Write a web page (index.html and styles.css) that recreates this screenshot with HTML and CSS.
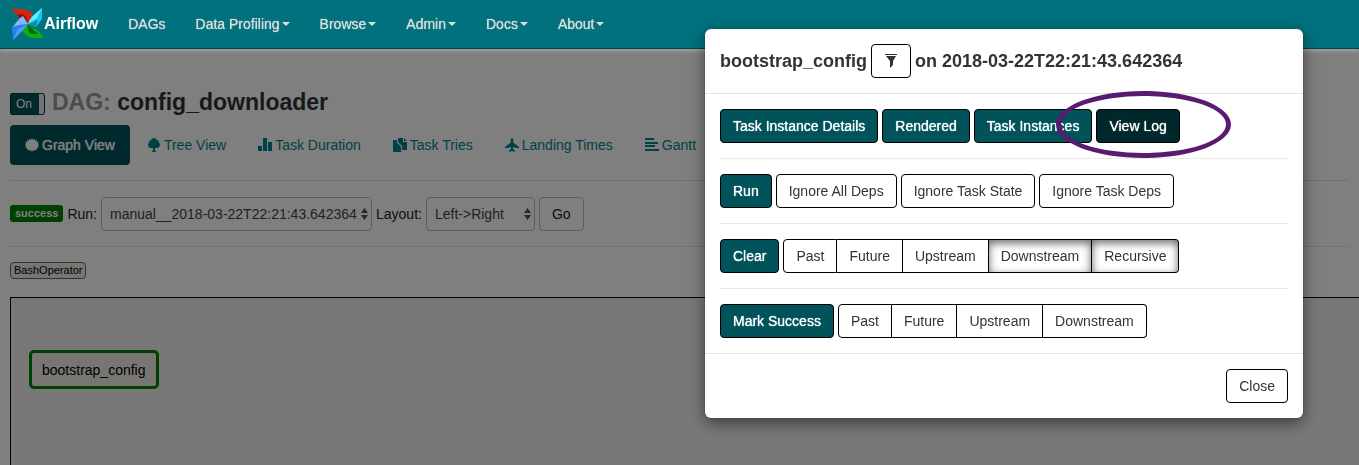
FILE: index.html
```html
<!DOCTYPE html>
<html lang="en">
<head>
<meta charset="utf-8">
<title>Airflow - DAG: config_downloader</title>
<link rel="stylesheet" href="styles.css">
</head>
<body>
<nav class="navbar">
  <a class="brand" href="#">
    <svg class="logo" viewBox="0 0 34 34" aria-hidden="true">
      <path d="M1 2H14Q19 3 22 7L25 11 18 17Q15 13 11 12 8 10 7 8 4 5 1 2Z" fill="#d42412"/>
      <path d="M7 8Q10 6 14 8 18 11 18 17 15 13 11 12Z" fill="#8c1409"/>
      <path d="M32 1V12L26 20 18 17Q20 11 24 8Z" fill="#12c8ee"/>
      <path d="M32 1L27 11 18 17Q20 11 24 8Z" fill="#5deeff"/>
      <path d="M26 20L18 17 28 13Z" fill="#0790b0"/>
      <path d="M34 31H22Q15 29 12 24L18 17Q22 22 26 22 30 25 34 31Z" fill="#0bb012"/>
      <path d="M18 17Q17 24 21 27L28 27Q22 22 18 17Z" fill="#066a0c"/>
      <path d="M3 33L2 20 9 14 18 17 12 24Z" fill="#2f7cf2"/>
      <path d="M3 20Q8 12 13 9L18 17 9 18Z" fill="#86b6f8"/>
      <path d="M3 33L8 22 18 17 12 24Z" fill="#4d9cf8"/>
    </svg>
    <span>Airflow</span>
  </a>
  <ul class="menu">
    <li><a href="#">DAGs</a></li>
    <li><a href="#">Data Profiling<i class="caret"></i></a></li>
    <li><a href="#">Browse<i class="caret"></i></a></li>
    <li><a href="#">Admin<i class="caret"></i></a></li>
    <li><a href="#">Docs<i class="caret"></i></a></li>
    <li><a href="#">About<i class="caret"></i></a></li>
  </ul>
</nav>

<main class="page">
  <header class="dag-header">
    <button class="toggle" type="button" aria-pressed="true"><span>On</span></button>
    <h1><span class="muted">DAG:</span> config_downloader</h1>
  </header>
  <ul class="tabs">
    <li><a class="tab active" href="#">
      <svg class="icon" viewBox="0 0 14 14" aria-hidden="true"><path d="M7 0l1 2 1.600-1.500.3 2.200 2.200-.8-.4 2.200 2.200.2-1.200 1.800L14.300 7l-1.600 1 1.200 1.800-2.200.1.400 2.200-2.200-.7-.3 2.200L8 12l-1 2-1-2-1.600 1.600-.3-2.200-2.200.7.400-2.200-2.200-.1L1.300 8-.3 7l1.600-.9L.1 4.300l2.200-.2-.4-2.200 2.200.8.3-2.200L6 2z"/></svg>
      Graph View</a></li>
    <li><a class="tab" href="#">
      <svg class="icon" viewBox="0 0 14 14" aria-hidden="true"><path d="M7 0a3 3 0 0 1 2.700 1.700A3 3 0 0 1 12 4.500 3.300 3.300 0 0 1 10.500 10H8v2.500l1.500 1.500h-5L6 12.500V10H3.500A3.300 3.300 0 0 1 2 4.500a3 3 0 0 1 2.300-2.800A3 3 0 0 1 7 0z"/></svg>
      Tree View</a></li>
    <li><a class="tab" href="#">
      <svg class="icon" viewBox="0 0 14 14" aria-hidden="true"><path d="M0 8h4v5H0zM5 0h4v13H5zM10 4h4v9h-4z"/></svg>
      Task Duration</a></li>
    <li><a class="tab" href="#">
      <svg class="icon" viewBox="0 0 14 14" aria-hidden="true"><path d="M0 2h4v3l4 4v5H0zM5 0h5v4h4v8H9V8L5 4zM11 0l3 3h-3zM5 5.500L7.500 8H5z"/></svg>
      Task Tries</a></li>
    <li><a class="tab" href="#">
      <svg class="icon" viewBox="0 0 14 14" aria-hidden="true"><path d="M7 0c1 0 1.300 1 1.300 2v2.500L14 9v1.500L8.300 9 8 11l2 1.500V14l-3-1-3 1v-1.500L6 11l-.3-2L0 10.500V9l5.700-4.500V2c0-1 .3-2 1.300-2z"/></svg>
      Landing Times</a></li>
    <li><a class="tab" href="#">
      <svg class="icon" viewBox="0 0 14 14" aria-hidden="true"><path d="M0 0h9v2H0zM0 4h13v2H0zM0 7h10v2H0zM0 11h14v2H0z"/></svg>
      Gantt</a></li>
  </ul>
  <hr class="rule">
  <form class="filters">
    <span class="state">success</span>
    <label for="run">Run:</label>
    <span class="select run">
      <select id="run"><option>manual__2018-03-22T22:21:43.642364</option></select>
      <svg viewBox="0 0 7 12" aria-hidden="true"><path d="M0 5h7L3.500 0zM0 7h7l-3.500 5z"/></svg>
    </span>
    <label for="layout">Layout:</label>
    <span class="select layout">
      <select id="layout"><option>Left-&gt;Right</option></select>
      <svg viewBox="0 0 7 12" aria-hidden="true"><path d="M0 5h7L3.500 0zM0 7h7l-3.500 5z"/></svg>
    </span>
    <button class="go" type="button">Go</button>
  </form>
  <hr class="rule">
  <div class="legend"><span class="operator">BashOperator</span></div>
  <section class="graph">
    <button class="node" type="button">bootstrap_config</button>
  </section>
</main>

<div class="backdrop"></div>
<div class="overlay">
  <div class="modal" role="dialog" aria-labelledby="modal-title">
    <header class="modal-header">
      <h2 id="modal-title">bootstrap_config
        <button class="btn filter" type="button" aria-label="Filter"><svg viewBox="0 0 12 14" aria-hidden="true"><path d="M0 0h12v1H0zM1 2h10L8 7v4l-3 3V7z"/></svg></button>
        on 2018-03-22T22:21:43.642364</h2>
    </header>
    <div class="modal-body">
      <div class="actions">
        <button class="btn primary" type="button">Task Instance Details</button>
        <button class="btn primary" type="button">Rendered</button>
        <button class="btn primary" type="button">Task Instances</button>
        <span class="marked"><button class="btn primary pressed" type="button">View Log</button><i class="ring"></i></span>
      </div>
      <hr>
      <div class="actions">
        <button class="btn primary" type="button">Run</button>
        <button class="btn" type="button">Ignore All Deps</button>
        <button class="btn" type="button">Ignore Task State</button>
        <button class="btn" type="button">Ignore Task Deps</button>
      </div>
      <hr>
      <div class="actions">
        <button class="btn primary" type="button">Clear</button>
        <span class="group">
          <button class="btn" type="button">Past</button>
          <button class="btn" type="button">Future</button>
          <button class="btn" type="button">Upstream</button>
          <button class="btn on" type="button" aria-pressed="true">Downstream</button>
          <button class="btn on" type="button" aria-pressed="true">Recursive</button>
        </span>
      </div>
      <hr>
      <div class="actions">
        <button class="btn primary" type="button">Mark Success</button>
        <span class="group">
          <button class="btn" type="button">Past</button>
          <button class="btn" type="button">Future</button>
          <button class="btn" type="button">Upstream</button>
          <button class="btn" type="button">Downstream</button>
        </span>
      </div>
    </div>
    <footer class="modal-footer"><button class="btn" type="button">Close</button></footer>
  </div>
</div>
</body>
</html>
```
FILE: styles.css
```css
* { box-sizing: border-box; }
html { height: 100%; }
body {
  margin: 0;
  min-height: 100%;
  display: flex;
  flex-direction: column;
  overflow: hidden;
  background: #fff;
  color: #333;
  font: 14px/20px "Liberation Sans", Arial, sans-serif;
}
button, select { font: inherit; color: inherit; }
ul { list-style: none; margin: 0; padding: 0; }
a { text-decoration: none; }
h1, h2 { margin: 0; font-weight: 700; }

.navbar {
  position: relative;
  z-index: 2;
  display: flex;
  align-items: center;
  height: 49px;
  padding-left: 10px;
  background: #00717d;
  border-bottom: 1px solid #00444b;
  box-shadow: 0 1px 5px rgba(255, 255, 255, .4);
}
.brand {
  display: flex;
  align-items: center;
  color: #fff;
  font-size: 16px;
  font-weight: 700;
}
.logo { width: 34px; height: 34px; }
.menu { display: flex; padding-left: 15px; }
.menu a {
  display: flex;
  align-items: center;
  padding: 0 15px;
  color: #dcdcdc;
  text-shadow: 0 0 1px #dcdcdc;
}
.caret {
  margin-left: 2px;
  border: 4px solid transparent;
  border-top-color: #dcdcdc;
  border-bottom-width: 0;
}

.page {
  flex: 1;
  display: flex;
  flex-direction: column;
  padding: 37px 10px 0;
}
.dag-header { display: flex; align-items: center; gap: 7px; height: 33px; }
.toggle {
  width: 35px;
  height: 22px;
  margin-top: 2px;
  padding: 0 5px;
  border: 1px solid #00363c;
  border-right: 6px solid #e8e8e8;
  outline: 1px solid #00363c;
  outline-offset: -1px;
  border-radius: 3px;
  background: #00535b;
  color: #fff;
  font-size: 12px;
  line-height: 20px;
  text-align: left;
}
.dag-header h1 { font-size: 23px; line-height: 33px; }
.muted { color: #999; }

.tabs { display: flex; gap: 2px; margin-top: 6px; }
.tab {
  display: flex;
  align-items: center;
  gap: 3px;
  padding: 10px 15px;
  border-radius: 4px;
  color: #00818e;
  white-space: nowrap;
}
.tab.active { background: #00535b; color: #fff; text-shadow: 0 0 1px #fff; }
.icon { width: 14px; height: 14px; fill: currentColor; }

.rule { width: 100%; margin: 15px 0; border: 0; border-top: 1px solid #e2e2e2; }
.filters { display: flex; align-items: center; gap: 4px; height: 35px; color: #222; }
.state {
  padding: 0 5px;
  border-radius: 3px;
  background: #008000;
  color: #fff;
  font-size: 11px;
  font-weight: 700;
  line-height: 17px;
}
.select { display: grid; align-items: center; }
.select select, .select svg { grid-area: 1 / 1; }
.select select {
  width: 100%;
  height: 34px;
  padding: 0 8px;
  appearance: none;
  border: 1px solid #bbb;
  border-radius: 4px;
  background: #fff;
  color: #444;
}
.select svg { justify-self: end; width: 7px; height: 12px; margin-right: 4px; fill: #555; pointer-events: none; }
.run { width: 271px; }
.layout { width: 109px; }
.go {
  height: 34px;
  padding: 0 12px;
  border: 1px solid #bbb;
  border-radius: 4px;
  background: #fff;
}
.legend { display: flex; }
.operator {
  padding: 0 3px;
  border: 1px solid #666;
  border-radius: 4px;
  background: #f0ede4;
  color: #000;
  font-size: 11px;
  line-height: 15px;
}
.graph {
  flex: 1;
  margin: 18px -10px 0 0;
  padding: 52px 18px;
  border: solid #000;
  border-width: 1px 0 0 1px;
  background: #f0f0f0;
}
.node {
  height: 39px;
  padding: 0 10px;
  border: 3px solid #008000;
  border-radius: 5px;
  background: #f0ede4;
  color: #000;
}

.backdrop { position: fixed; inset: 0; z-index: 1; background: rgba(0, 0, 0, .5); }
.overlay {
  position: fixed;
  inset: 0;
  z-index: 3;
  display: flex;
  justify-content: flex-end;
  align-items: flex-start;
  padding: 29px 56px 0 10px;
}
.modal {
  width: 44%;
  min-width: 598px;
  border-radius: 6px;
  background: #fff;
  box-shadow: 0 0 1px rgba(0, 0, 0, .6), 0 5px 15px rgba(0, 0, 0, .5);
}
.modal-header { padding: 15px; border-bottom: 1px solid #e2e2e2; }
.modal-header h2 {
  display: flex;
  align-items: center;
  gap: 4px;
  font-size: 18px;
}
.modal-body { padding: 15px; }
.modal-body hr { margin: 15px 0; border: 0; border-top: 1px solid #eaeaea; }
.modal-footer { display: flex; justify-content: flex-end; padding: 15px; border-top: 1px solid #e2e2e2; }
.actions { display: flex; gap: 4px; }
.btn {
  height: 34px;
  padding: 0 12px;
  border: 1px solid #000;
  border-radius: 4px;
  background: #fff;
  white-space: nowrap;
}
.btn.primary { background: #00535b; color: #fff; text-shadow: 0 0 1px #fff; }
.btn.pressed { background: #00282c; }
.btn.on { box-shadow: inset 0 3px 8px rgba(0, 0, 0, .6); }
.filter { width: 40px; padding: 0; }
.filter svg { display: block; width: 12px; height: 14px; margin: 0 auto; fill: #333; }
.group { display: flex; }
.group .btn { border-radius: 0; }
.group .btn + .btn { border-left: 0; }
.group .btn:first-child { border-radius: 4px 0 0 4px; }
.group .btn:last-child { border-radius: 0 4px 4px 0; }
.marked { position: relative; display: flex; }
.ring {
  position: absolute;
  inset: -18px -51px -15px -40px;
  border: 5px solid #5a1a72;
  border-radius: 50%;
  pointer-events: none;
}
```
